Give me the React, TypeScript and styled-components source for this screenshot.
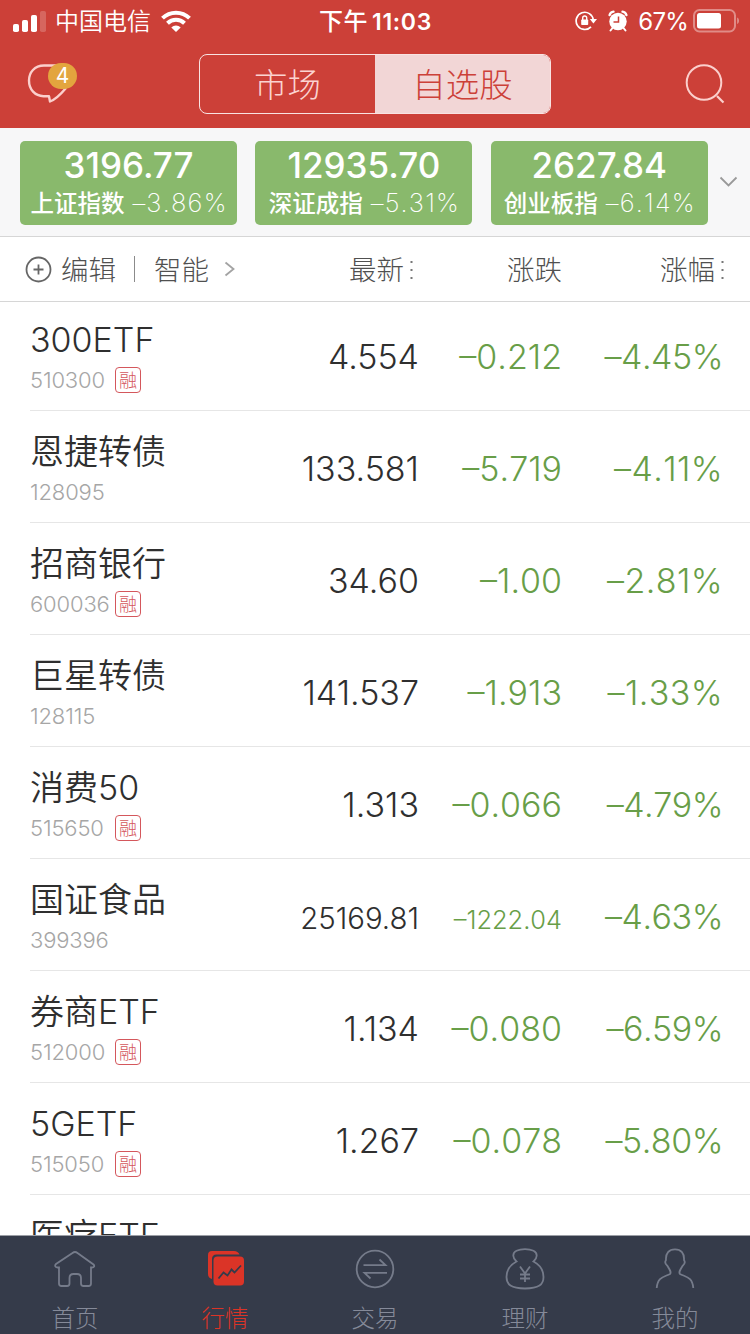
import React from "react";
import styled, { createGlobalStyle } from "styled-components";

const GlobalStyle = createGlobalStyle`
  * { box-sizing: border-box; }
  body {
    margin: 0;
    background: #fff;
    font-family: Inter, "Noto Sans CJK SC", sans-serif;
    color: #2f2f2f;
  }
`;

const Screen = styled.div`
  width: 750px;
  height: 1334px;
  display: flex;
  flex-direction: column;
  overflow: hidden;
  background: #fff;
`;

const Top = styled.header`
  height: 128px;
  background: #cc4038;
  color: #fff;
`;

const StatusBar = styled.div`
  height: 40px;
  display: grid;
  grid-template-columns: 1fr auto 1fr;
  align-items: center;
  padding: 0 11px 0 12px;
  font-size: 24px;
  line-height: 38px;
`;

const StatusGroup = styled.div<{ $end?: boolean }>`
  display: flex;
  align-items: center;
  justify-content: ${(p) => (p.$end ? "flex-end" : "flex-start")};
`;

const Carrier = styled.span`
  margin: 0 10px 0 9px;
  padding-top: 3px;
  font-weight: 350;
`;

const Clock = styled.span`
  padding-top: 2px;
  font-size: 23px;
  font-weight: 600;
  letter-spacing: 0.7px;
`;

const ClockPrefix = styled.span`
  font-size: 24px;
  font-weight: 500;
  letter-spacing: 0.5px;
  margin-right: 4px;
`;

const Battery = styled.span`
  margin: 0 5px 0 10px;
  padding-top: 3px;
  font-size: 24px;
  letter-spacing: -0.8px;
`;

const NavBar = styled.div`
  height: 88px;
  display: grid;
  grid-template-columns: 1fr 352px 1fr;
  align-items: center;
  padding: 0 25px 0 25px;
`;

const NavSide = styled.div<{ $end?: boolean }>`
  display: flex;
  justify-content: ${(p) => (p.$end ? "flex-end" : "flex-start")};
`;

const Message = styled.div`
  position: relative;
  width: 52px;
  height: 44px;
`;

const Badge = styled.span`
  position: absolute;
  left: 23px;
  top: 1px;
  width: 29px;
  height: 26px;
  border-radius: 13px;
  background: #e3a53e;
  font-size: 21px;
  font-weight: 400;
  line-height: 26px;
  text-align: center;
`;

const Segmented = styled.div`
  height: 60px;
  display: flex;
  border: 1px solid #f9e3e2;
  border-radius: 8px;
  overflow: hidden;
`;

const Segment = styled.div<{ $active?: boolean }>`
  flex: 1;
  padding-top: 1px;
  font-size: 33.5px;
  font-weight: 300;
  line-height: 58px;
  text-align: center;
  color: ${(p) => (p.$active ? "#cc4038" : "#fbd3d1")};
  background: ${(p) => (p.$active ? "#f2d6d6" : "transparent")};
`;

const IndexBar = styled.section`
  height: 109px;
  display: flex;
  align-items: flex-start;
  gap: 18.4px;
  padding: 13px 0 0 20px;
  background: #f7f7f8;
  border-bottom: 1px solid #d6d6d6;
`;

const IndexCard = styled.div`
  width: 217px;
  height: 84px;
  border-radius: 5px;
  background: #89b96c;
  color: #fff;
  text-align: center;
  white-space: nowrap;
`;

const IndexValue = styled.div`
  height: 48px;
  line-height: 48px;
  font-size: 35px;
  font-weight: 450;
`;

const IndexMeta = styled.div`
  display: flex;
  justify-content: center;
  gap: 8px;
  line-height: 28px;
`;

const IndexName = styled.span`
  padding-top: 1px;
  font-size: 23.5px;
  font-weight: 500;
`;

const IndexChange = styled.span`
  font-size: 25.5px;
  font-weight: 200;
  letter-spacing: 1.2px;
  margin-right: -1px;
  font-kerning: none;
`;

const Expand = styled.div`
  display: flex;
  align-items: center;
  height: 82px;
  margin-left: -7px;
`;

const COLUMNS = "419px 143px 160px";

const Toolbar = styled.section`
  height: 65px;
  display: grid;
  grid-template-columns: ${COLUMNS};
  align-items: center;
  border-bottom: 1px solid #d6d6d6;
  font-size: 27.5px;
  font-weight: 300;
  line-height: 62px;
  color: #505050;
`;

const ToolbarLead = styled.div`
  display: flex;
  align-items: center;
  justify-content: space-between;
  padding-left: 25px;
`;

const Actions = styled.div`
  display: flex;
  align-items: center;
`;

const EditLabel = styled.span`
  margin-left: 9px;
  padding-top: 2px;
`;

const Divider = styled.span`
  width: 1px;
  height: 26px;
  margin: 0 19px 0 18px;
  background: #8b8b8b;
`;

const SmartLabel = styled.span`
  margin-right: 15px;
  padding-top: 2px;
`;

const Heading = styled.div<{ $shift?: number }>`
  display: flex;
  align-items: center;
  justify-content: flex-end;
  padding-top: 2px;
  margin-right: ${(p) => p.$shift ?? 0}px;
`;

const List = styled.main`
  flex: 1;
  min-height: 0;
  overflow: hidden;
`;

const Rows = styled.div`
  margin-top: -3px;
`;

const Row = styled.div`
  height: 112px;
  margin-left: 30px;
  display: grid;
  grid-template-columns: 200px 189px 143px 160px;
  border-bottom: 1px solid #e6e6e6;
  white-space: nowrap;
`;

const Stock = styled.div`
  padding-top: 17px;
`;

const Name = styled.div`
  font-size: 34px;
  font-weight: 350;
  line-height: 47px;
`;

const CodeLine = styled.div`
  display: flex;
  align-items: center;
  height: 34px;
`;

const Code = styled.span`
  width: 85px;
  font-size: 22px;
  font-weight: 300;
  letter-spacing: -0.15px;
  color: #a6a6a6;
`;

const Margin = styled.span`
  width: 26px;
  height: 26px;
  padding-top: 1px;
  border: 1px solid #d4575c;
  border-radius: 4px;
  color: #d4575c;
  font-size: 18px;
  font-weight: 300;
  line-height: 24px;
  text-align: center;
`;

const Figure = styled.div<{ $down?: boolean; $tracking?: number }>`
  font-size: 34px;
  font-weight: 330;
  line-height: 115px;
  text-align: right;
  letter-spacing: ${(p) => p.$tracking ?? 0}px;
  font-kerning: ${(p) => (p.$down ? "none" : "auto")};
  color: ${(p) => (p.$down ? "#689e48" : "#2f2f2f")};
`;

const Digits = styled.span<{ $size?: number }>`
  font-size: ${(p) => p.$size ?? 34}px;
  line-height: 1;
`;

const Percent = styled(Figure)`
  margin-right: -1px;
`;

const TabBar = styled.nav`
  height: 99px;
  display: grid;
  grid-template-columns: repeat(5, 1fr);
  background: #353b4a;
  border-top: 1px solid #9c9fa6;
`;

const Tab = styled.div<{ $active?: boolean }>`
  display: flex;
  flex-direction: column;
  align-items: center;
  padding-top: 10px;
  font-size: 23.5px;
  font-weight: 300;
  line-height: 24px;
  color: ${(p) => (p.$active ? "#db3427" : "#858a99")};
`;

const TabLabel = styled.span`
  margin-top: 13px;
`;

const SignalIcon = () => (
  <svg width="34" height="22" viewBox="0 0 34 22" fill="#fff">
    <rect x="1" y="14" width="6" height="8" rx="1.8" />
    <rect x="10" y="10" width="6" height="12" rx="1.8" />
    <rect x="19" y="5" width="6" height="17" rx="1.8" />
    <rect x="28" y="1" width="6" height="21" rx="1.8" opacity="0.2" />
  </svg>
);

const WifiIcon = () => (
  <svg width="30" height="22" viewBox="0 0 30 22" fill="none" stroke="#fff" strokeWidth="4">
    <path d="M1.500 8.200C9 .8 21 .8 28.500 8.200" />
    <path d="M6.500 13.300C11.200 8.700 18.800 8.700 23.500 13.300" />
    <path d="M10.300 17.500C12.900 14.800 17.100 14.800 19.700 17.500L15 22Z" fill="#fff" stroke="none" />
  </svg>
);

const LockIcon = () => (
  <svg width="22" height="22" viewBox="0 0 22 22" fill="none" stroke="#fff" strokeWidth="1.700">
    <path d="M18.300 10A8.600 8.600 0 1 0 16 16.800" />
    <path d="M14.800 9H22L18.400 13.500Z" fill="#fff" stroke="none" />
    <rect x="6.200" y="9.500" width="7" height="5.500" rx=".8" fill="#fff" stroke="none" />
    <path d="M7.700 10V8a2 2 0 0 1 4 0v2" strokeWidth="1.400" />
  </svg>
);

const AlarmGlyph = styled.svg`
  margin-left: 11px;
`;

const AlarmIcon = () => (
  <AlarmGlyph width="20" height="22" viewBox="0 0 20 22" fill="none" stroke="#fff">
    <circle cx="10" cy="11.500" r="8.700" fill="#fff" stroke="none" />
    <path d="M1.600 5C2.200 3 3.500 1.800 5.500 1.600M18.400 5C17.800 3 16.500 1.800 14.500 1.600" strokeWidth="2.400" strokeLinecap="round" />
    <path d="M4.500 18L2.500 20.500M15.500 18l2 2.500" strokeWidth="2" strokeLinecap="round" />
    <path d="M10.500 6.500V12H5.500" stroke="#cc4038" strokeWidth="1.500" />
  </AlarmGlyph>
);

const BatteryIcon = () => (
  <svg width="46" height="24" viewBox="0 0 46 24" fill="none">
    <rect x="1" y="1" width="41" height="21.500" rx="5.500" stroke="#fff" strokeOpacity="0.4" strokeWidth="2" />
    <rect x="4" y="4" width="24" height="15.500" rx="2.500" fill="#fff" />
    <path d="M44.200 8.500c2.300 1 2.300 5.500 0 6.500z" fill="#fff" fillOpacity="0.45" />
  </svg>
);

const BubbleIcon = () => (
  <svg width="52" height="44" viewBox="0 0 52 44" fill="none" stroke="#fbcfcc" strokeWidth="2.400" strokeLinejoin="round">
    <path d="M32 3.500H19C9.500 3.500 4 10.500 4 18.500C4 27.500 10 34 18.500 34.200H24L25 39.500C29 38 36 32 41 26" />
  </svg>
);

const SearchIcon = () => (
  <svg width="42" height="42" viewBox="0 0 42 42" fill="none" stroke="#fbcfcc" strokeWidth="2">
    <circle cx="21" cy="19.500" r="17.300" />
    <path d="M34 33l6.500 6.500" strokeWidth="2.200" />
  </svg>
);

const ChevronDown = () => (
  <svg width="20" height="12" viewBox="0 0 20 12" fill="none" stroke="#999" strokeWidth="1.800">
    <path d="M1.500 1.500L9.500 9.500L17.500 1.500" />
  </svg>
);

const ChevronRight = () => (
  <svg width="12" height="16" viewBox="0 0 12 16" fill="none" stroke="#a3a3a3" strokeWidth="1.800">
    <path d="M1.500 1.500L9.500 8L1.500 14.500" />
  </svg>
);

const AddIcon = () => (
  <svg width="27" height="27" viewBox="0 0 27 27" fill="none" stroke="#666" strokeWidth="1.800">
    <circle cx="13.500" cy="13.500" r="12" />
    <path d="M8.500 13.500h10M13.500 8.500v10" />
  </svg>
);

const DotsIcon = () => (
  <svg width="15" height="22" viewBox="0 0 15 22" fill="#777">
    <rect x="6.500" y="2" width="2" height="2" />
    <rect x="6.500" y="10" width="2" height="2" />
    <rect x="6.500" y="18" width="2" height="2" />
  </svg>
);

const HomeIcon = () => (
  <path d="M6 17.500H4.500C2 17.500 1.500 15.500 3 14L19.500 3Q22 1 24.500 3L40.500 14.500C42 16 41 17.500 39 17.500H38V33.500Q38 36 35.500 36H30.500Q28 36 28 33.500V28Q28 24 24 24H20.500Q16.500 24 16.500 28V33.500Q16.500 36 14 36H8.500Q6 36 6 33.500Z" />
);

const MarketIcon = () => (
  <g stroke="none" fill="#db3427" transform="translate(1 0)">
    <path d="M4 5Q4 1 8 1H30Q34 1 35.500 4.500H12.500Q8 4.500 8 9V29Q4 28 4 24Z" />
    <rect x="9.500" y="6.500" width="30.500" height="29" rx="4" />
    <path d="M14.500 28.500L19.500 22.500L23.500 25.500L27.500 19.500L30.500 22.500L37 15.500" fill="none" stroke="#353b4a" strokeWidth="1.800" />
  </g>
);

const TradeIcon = () => (
  <>
    <circle cx="22" cy="19" r="18.300" />
    <path d="M10.500 15.200H32.500L26.500 9.500M34 22.800H11.500L17.500 28.500" />
  </>
);

const MoneyIcon = () => (
  <>
    <path d="M13.500 11.500C9.500 8 9 3 13.500 .8C18 -1.500 26 -1.500 30.500 .8C35 3 34.500 8 30.500 11.500C37 15 40.500 21 40.500 27C40.500 34.500 36 38.500 22 38.500S3.500 34.500 3.500 27C3.500 21 7 15 13.500 11.500Z" />
    <path d="M17 16.500L22 23.500L27 16.500M22 23.500V32M17 24.500H27M17 28.500H27" />
  </>
);

const PersonIcon = () => (
  <path d="M3.700 38C4.500 27 11 27 17 24C18.500 22.500 17 20 14.500 16C12 14 12 11.500 13 10C12.500 3 16 -.6 22 -.6S31.500 3 31 10C32 11.500 32 14 29.500 16C27 20 25.500 22.500 27 24C33 27 39.500 27 40.300 38" />
);

const indices = [
  { value: "3196.77", name: "上证指数", change: "–3.86%" },
  { value: "12935.70", name: "深证成指", change: "–5.31%" },
  { value: "2627.84", name: "创业板指", change: "–6.14%" },
];

const stocks = [
  { name: "300ETF", code: "510300", margin: true, price: "4.554", change: "–0.212", pct: "–4.45%" },
  { name: "恩捷转债", code: "128095", price: "133.581", change: "–5.719", pct: "–4.11%" },
  { name: "招商银行", code: "600036", margin: true, price: "34.60", change: "–1.00", pct: "–2.81%" },
  { name: "巨星转债", code: "128115", price: "141.537", change: "–1.913", pct: "–1.33%" },
  { name: "消费50", code: "515650", margin: true, price: "1.313", change: "–0.066", pct: "–4.79%" },
  { name: "国证食品", code: "399396", price: "25169.81", change: "–1222.04", pct: "–4.63%", priceSize: 29.4, changeSize: 25.4 },
  { name: "券商ETF", code: "512000", margin: true, price: "1.134", change: "–0.080", pct: "–6.59%" },
  { name: "5GETF", code: "515050", margin: true, price: "1.267", change: "–0.078", pct: "–5.80%" },
  { name: "医疗ETF", code: "", price: "", change: "", pct: "" },
];

// The narrow digit "1" gets looser tracking so the percentages keep an even width.
const percentTracking = (pct: string) => (pct.includes("1") ? 0.4 : -0.5);

const tabs = [
  { label: "首页", Icon: HomeIcon },
  { label: "行情", Icon: MarketIcon, active: true },
  { label: "交易", Icon: TradeIcon },
  { label: "理财", Icon: MoneyIcon },
  { label: "我的", Icon: PersonIcon },
];

const TabGlyph = styled.svg`
  width: 44px;
  height: 48px;
  overflow: visible;
  fill: none;
  stroke: #757b8a;
  stroke-width: 1.8;
`;

export default function App() {
  return (
    <Screen>
      <GlobalStyle />
      <Top>
        <StatusBar>
          <StatusGroup>
            <SignalIcon />
            <Carrier>中国电信</Carrier>
            <WifiIcon />
          </StatusGroup>
          <Clock>
            <ClockPrefix>下午</ClockPrefix>11:03
          </Clock>
          <StatusGroup $end>
            <LockIcon />
            <AlarmIcon />
            <Battery>67%</Battery>
            <BatteryIcon />
          </StatusGroup>
        </StatusBar>
        <NavBar>
          <NavSide>
            <Message>
              <BubbleIcon />
              <Badge>4</Badge>
            </Message>
          </NavSide>
          <Segmented>
            <Segment>市场</Segment>
            <Segment $active>自选股</Segment>
          </Segmented>
          <NavSide $end>
            <SearchIcon />
          </NavSide>
        </NavBar>
      </Top>
      <IndexBar>
        {indices.map((i) => (
          <IndexCard key={i.name}>
            <IndexValue>{i.value}</IndexValue>
            <IndexMeta>
              <IndexName>{i.name}</IndexName>
              <IndexChange>{i.change}</IndexChange>
            </IndexMeta>
          </IndexCard>
        ))}
        <Expand>
          <ChevronDown />
        </Expand>
      </IndexBar>
      <Toolbar>
        <ToolbarLead>
          <Actions>
            <AddIcon />
            <EditLabel>编辑</EditLabel>
            <Divider />
            <SmartLabel>智能</SmartLabel>
            <ChevronRight />
          </Actions>
          <Heading>
            最新
            <DotsIcon />
          </Heading>
        </ToolbarLead>
        <Heading>涨跌</Heading>
        <Heading $shift={-8}>
          涨幅
          <DotsIcon />
        </Heading>
      </Toolbar>
      <List>
        <Rows>
          {stocks.map((s) => (
            <Row key={s.name}>
              <Stock>
                <Name>{s.name}</Name>
                <CodeLine>
                  <Code>{s.code}</Code>
                  {s.margin && <Margin>融</Margin>}
                </CodeLine>
              </Stock>
              <Figure>
                <Digits $size={s.priceSize}>{s.price}</Digits>
              </Figure>
              <Figure $down>
                <Digits $size={s.changeSize}>{s.change}</Digits>
              </Figure>
              <Percent $down $tracking={percentTracking(s.pct)}>
                <Digits>{s.pct}</Digits>
              </Percent>
            </Row>
          ))}
        </Rows>
      </List>
      <TabBar>
        {tabs.map(({ label, Icon, active }) => (
          <Tab key={label} $active={active}>
            <TabGlyph viewBox="0 -4 44 48">
              <Icon />
            </TabGlyph>
            <TabLabel>{label}</TabLabel>
          </Tab>
        ))}
      </TabBar>
    </Screen>
  );
}
